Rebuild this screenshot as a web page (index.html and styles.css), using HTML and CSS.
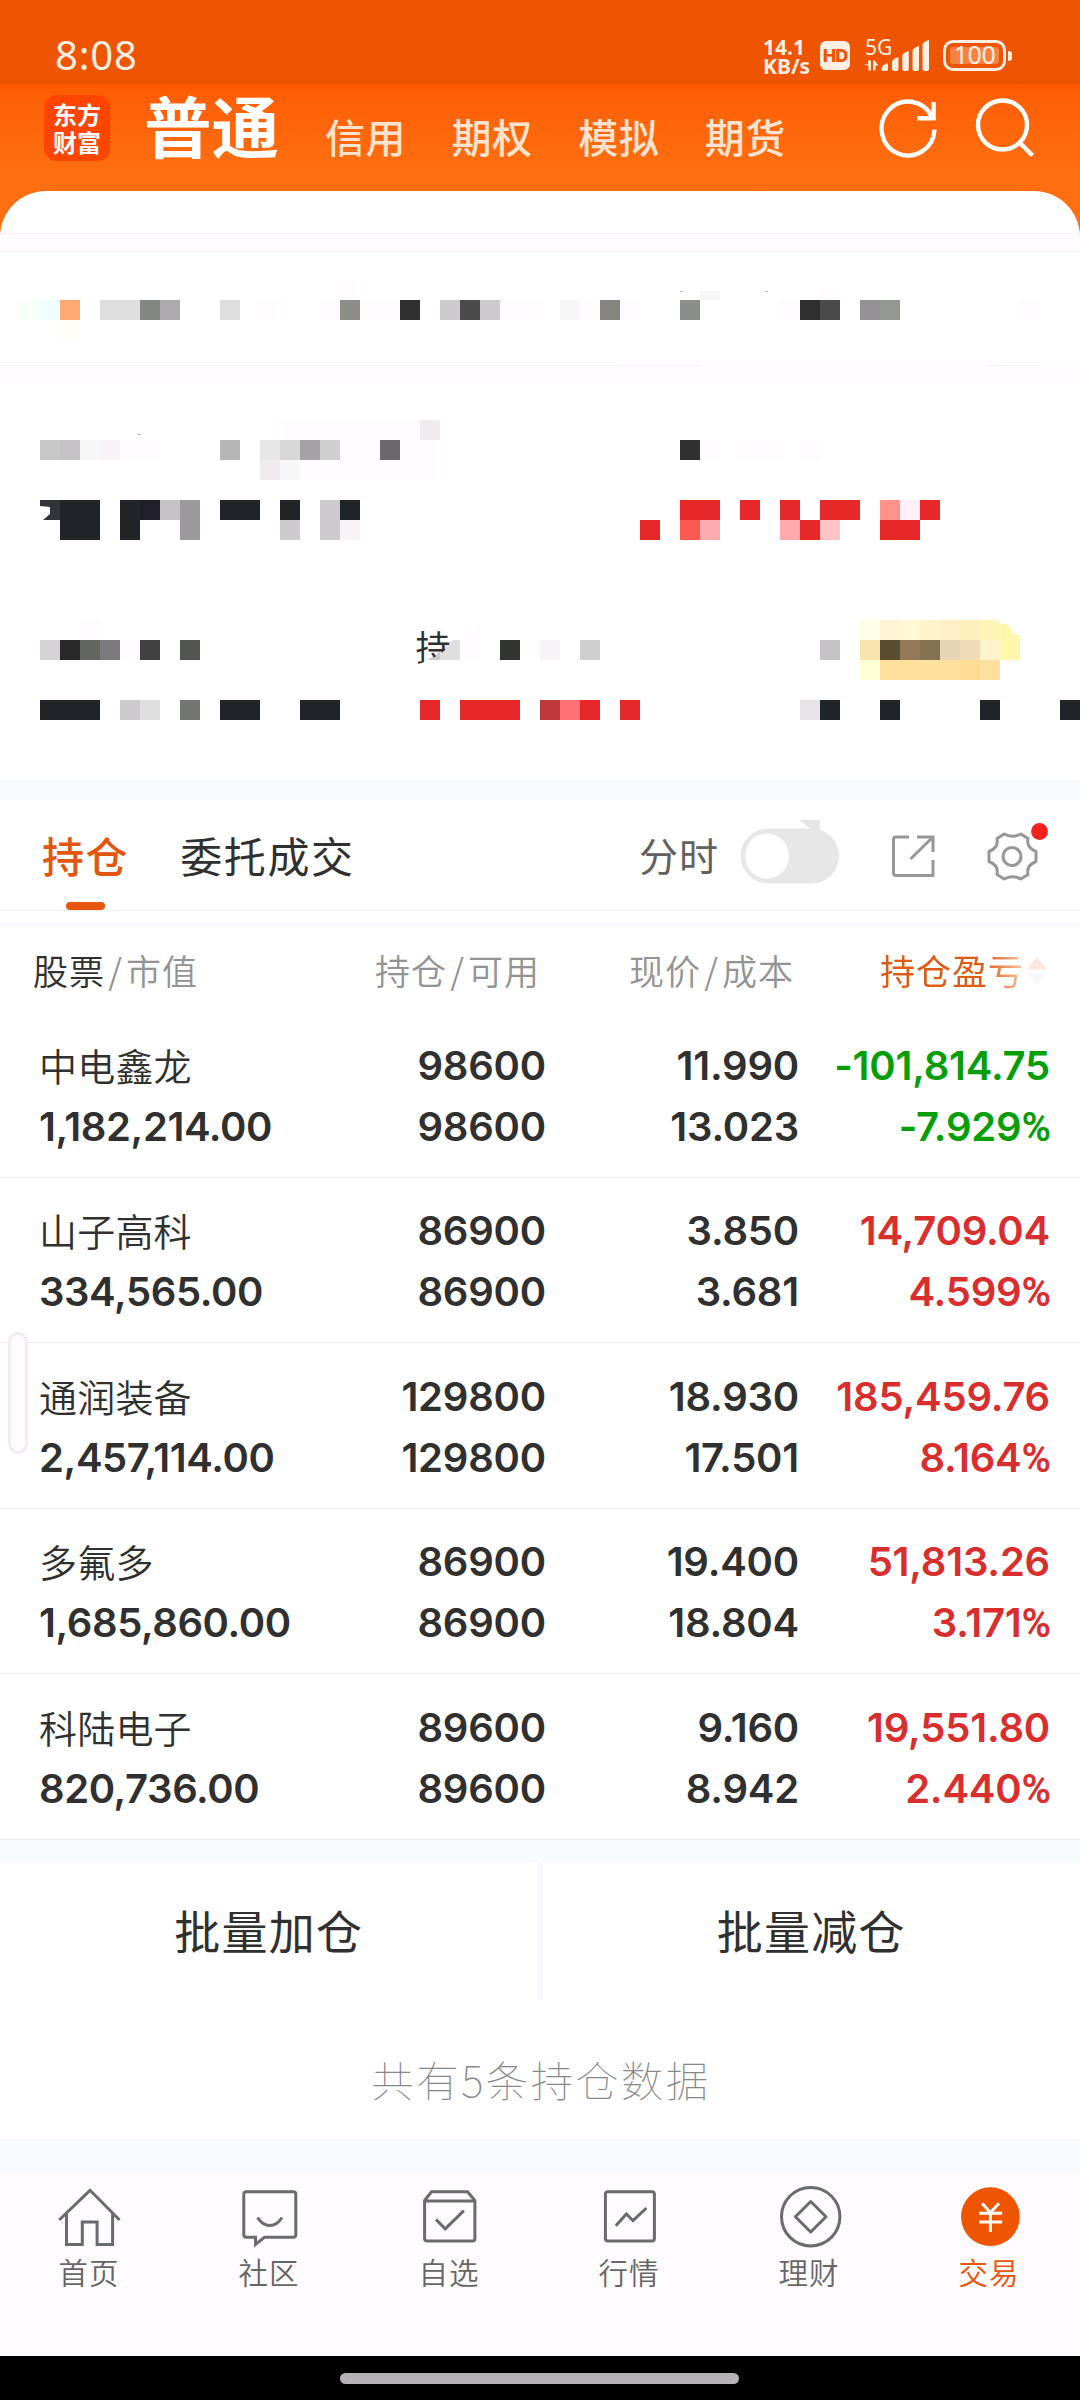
FILE: index.html
```html
<!DOCTYPE html>
<html lang="zh-CN">
<head>
<meta charset="utf-8">
<title>交易</title>
<link rel="stylesheet" href="styles.css">
</head>
<body>
<div class="status">
  <span class="clock">8:08</span>
  <div class="status-icons">
    <div class="speed">14.1<br>KB/s</div>
    <span class="hd">HD</span>
    <div class="signal">
      <span class="net">5G</span>
      <svg width="70" height="34" viewBox="862 38 70 34" fill="#ffeee2">
        <path d="M868 60.500h3v10h-2.500v-4.500l-5-1.500 4.500 0zM873 60.500h1.500l4 5h-3v5h-2.500z"/>
        <path d="M881.500 69q0-4 6.500-6v6q0 2-2 2h-3q-1.500 0-1.500-2zM892 61q2-3 6.500-4v12q0 2-2 2h-2.500q-2 0-2-2zM902.300 55q2-3 6.500-4v18q0 2-2 2h-2.500q-2 0-2-2zM912.500 50q2-3 6.500-4v23q0 2-2 2h-2.500q-2 0-2-2zM922.500 44q2-3 6.500-4v29q0 2-2 2h-2.500q-2 0-2-2z"/>
      </svg>
    </div>
    <div class="battery"><span class="level">100</span></div>
    <i class="battery-cap"></i>
  </div>
</div>

<div class="hero">
  <header class="appbar">
    <div class="logo">东方<br>财富</div>
    <nav class="modes">
      <span class="mode-on">普通</span><span class="mode">信用</span><span class="mode">期权</span><span class="mode">模拟</span><span class="mode">期货</span>
    </nav>
    <svg class="bar-icons" width="170" height="70" viewBox="870 94 170 70" fill="none" stroke="#fff" stroke-width="4.400">
      <path d="M934.500 129.500a26.500 27 0 1 1-3-13.500"/>
      <path d="M933.600 102v16.200H917"/>
      <circle cx="1002.500" cy="125" r="24.500"/>
      <path d="M1019.500 142.500l13 13"/>
    </svg>
  </header>
  <section class="sheet">
    <svg width="1080" height="589" viewBox="0 191 1080 589" shape-rendering="crispEdges">
      <g fill="#fffbff">
        <path d="M0 233h1080v19H0zM0 365h1080v20H0zM620 360h380v5h-380z"/>
        <path d="M260 300h20v20h-20zM320 300h20v20h-20zM340 280h20v20h-20zM360 300h40v20h-40zM500 300h40v20h-40zM580 300h20v20h-20zM620 300h20v20h-20zM780 300h20v20h-20zM820 289h20v11h-20zM1020 300h20v20h-20z"/>
        <path d="M280 420h160v60H280zM120 440h40v20h-40zM700 440h20v20h-20zM740 440h40v20h-40zM800 440h20v20h-20z"/>
        <path d="M80 620h20v20H80zM120 640h20v20h-20zM460 640l20-20v40h-20z"/>
      </g>
      <path fill="#fff1f3" d="M0 233h1080v1H0zM0 251h1080v1H0zM0 365h700v1H0zM987 365h54v1h-54z"/>

      <rect x="20" y="300" width="20" height="20" fill="#f7fff7"/>
      <rect x="40" y="300" width="20" height="20" fill="#efffff"/>
      <rect x="60" y="300" width="20" height="20" fill="#ffa973"/>
      <rect x="60" y="320" width="20" height="20" fill="#fffff7"/>
      <path fill="#dedede" d="M100 300h40v20h-40zM220 300h20v20h-20z"/>
      <path fill="#838681" d="M140 300h20v20h-20zM600 300h20v20h-20z"/>
      <path fill="#8b8e89" d="M340 300h20v20h-20zM680 300h20v20h-20z"/>
      <rect x="160" y="300" width="20" height="20" fill="#adaaad"/>
      <path fill="#303030" d="M400 300h20v20h-20zM800 300h20v20h-20zM680 440h20v20h-20z"/>
      <path fill="#4a4a4a" d="M460 300h20v20h-20zM820 300h20v20h-20z"/>
      <path fill="#cecbce" d="M440 300h20v20h-20zM480 300h20v20h-20z"/>
      <path fill="#f7f7f7" d="M560 300h20v20h-20zM700 291h20v9h-20z"/>
      <rect x="860" y="300" width="20" height="20" fill="#949294"/>
      <rect x="880" y="300" width="20" height="20" fill="#949792"/>
      <path fill="#bbb" d="M680 291h3v1h-3zM765 291h3v1h-3zM137 434h4v1h-4z"/>

      <rect x="420" y="420" width="20" height="20" fill="#efebef"/>
      <rect x="40" y="440" width="20" height="20" fill="#c6c7c6"/>
      <rect x="60" y="440" width="20" height="20" fill="#c6c3c6"/>
      <rect x="80" y="440" width="20" height="20" fill="#f7f7f7"/>
      <rect x="100" y="440" width="20" height="20" fill="#f7f3f7"/>
      <rect x="220" y="440" width="20" height="20" fill="#b5b6b5"/>
      <rect x="260" y="440" width="20" height="20" fill="#e7e7e7"/>
      <rect x="280" y="440" width="20" height="20" fill="#d6d7d6"/>
      <rect x="300" y="440" width="20" height="20" fill="#a5a2a5"/>
      <rect x="320" y="440" width="20" height="20" fill="#cecfce"/>
      <rect x="380" y="440" width="20" height="20" fill="#6b696b"/>
      <rect x="260" y="460" width="20" height="20" fill="#efebef"/>
      <rect x="280" y="460" width="20" height="20" fill="#f7f7f7"/>

      <path fill="#31353a" shape-rendering="auto" d="M40 500h20v20H43l7-6v-7l-10-1z"/>
      <path fill="#21252a" d="M60 500h40v40H60zM120 500h20v40h-20zM220 500h40v20h-40zM280 500h20v20h-20zM340 500h20v20h-20z"/>
      <rect x="140" y="500" width="20" height="20" fill="#211f29"/>
      <rect x="160" y="500" width="20" height="20" fill="#c6c3c6"/>
      <rect x="180" y="500" width="20" height="40" fill="#9c9a9c"/>
      <path fill="#cecbce" d="M320 500h20v40h-20zM280 520h20v20h-20z"/>
      <rect x="340" y="520" width="20" height="20" fill="#f7f3f7"/>
      <path fill="#e72829" d="M680 500h40v20h-40zM740 500h20v20h-20zM780 500h20v20h-20zM820 500h40v20h-40zM920 500h20v20h-20zM640 520h20v20h-20zM800 520h20v20h-20zM880 520h40v20h-40z"/>
      <rect x="880" y="500" width="20" height="20" fill="#ff928c"/>
      <rect x="900" y="500" width="20" height="20" fill="#fff0f7"/>
      <rect x="680" y="520" width="20" height="20" fill="#fa5a52"/>
      <path fill="#ffaaad" d="M700 520h20v20h-20zM780 520h20v20h-20z"/>
      <rect x="820" y="520" width="20" height="20" fill="#ffc3c6"/>

      <rect x="40" y="640" width="20" height="20" fill="#d6d3d6"/>
      <rect x="60" y="640" width="20" height="20" fill="#292829"/>
      <rect x="80" y="640" width="20" height="20" fill="#636561"/>
      <rect x="100" y="640" width="20" height="20" fill="#7b797b"/>
      <rect x="140" y="640" width="20" height="20" fill="#424142"/>
      <rect x="180" y="640" width="20" height="20" fill="#525552"/>
      <path fill="#dedfde" shape-rendering="auto" d="M440 651l13-11h7v20h-20z"/>
      <path fill="#cecbce" shape-rendering="auto" d="M427 660l7-4 6-5v9z"/>
      <rect x="500" y="640" width="20" height="20" fill="#313431"/>
      <rect x="540" y="640" width="20" height="20" fill="#f7f3f7"/>
      <rect x="580" y="640" width="20" height="20" fill="#cecfce"/>
      <rect x="820" y="640" width="20" height="20" fill="#c6c3c6"/>
      <clipPath id="cut"><path d="M410 625h45v14l-12 13-15 9-10 3h-8z"/></clipPath>
      <text class="held" x="415.500" y="660.500" clip-path="url(#cut)">持</text>

      <rect x="860" y="620" width="20" height="20" fill="#ffffe7"/>
      <rect x="880" y="620" width="20" height="20" fill="#fff3d6"/>
      <rect x="900" y="620" width="20" height="20" fill="#fff7d6"/>
      <rect x="920" y="620" width="20" height="20" fill="#fff3ce"/>
      <rect x="940" y="620" width="20" height="20" fill="#ffefc6"/>
      <rect x="960" y="620" width="20" height="20" fill="#ffefbd"/>
      <path fill="#fff3b5" shape-rendering="auto" d="M980 620h17l3 3v17h-20z"/>
      <path fill="#fff7ad" shape-rendering="auto" d="M1000 624h8l6 10 6 1v25h-20z"/>
      <rect x="860" y="640" width="20" height="20" fill="#f7e3ad"/>
      <rect x="880" y="640" width="20" height="20" fill="#5a4d31"/>
      <rect x="900" y="640" width="20" height="20" fill="#94795a"/>
      <rect x="920" y="640" width="20" height="20" fill="#847352"/>
      <rect x="940" y="640" width="20" height="20" fill="#e7d3b5"/>
      <rect x="960" y="640" width="20" height="20" fill="#efdbb5"/>
      <rect x="980" y="640" width="20" height="20" fill="#fff3ce"/>
      <rect x="860" y="660" width="20" height="20" fill="#ffffd6"/>
      <rect x="880" y="660" width="120" height="20" fill="#ffdf9c"/>
      <rect x="960" y="660" width="20" height="20" fill="#ffdb94"/>

      <path fill="#21252a" d="M40 700h60v20H40zM220 700h40v20h-40zM300 700h40v20h-40zM820 700h20v20h-20zM880 700h20v20h-20zM980 700h20v20h-20zM1060 700h20v20h-20z"/>
      <rect x="120" y="700" width="20" height="20" fill="#cecbce"/>
      <rect x="140" y="700" width="20" height="20" fill="#dedfde"/>
      <rect x="180" y="700" width="20" height="20" fill="#737573"/>
      <path fill="#e72829" d="M420 700h20v20h-20zM460 700h60v20h-60zM580 700h20v20h-20zM620 700h20v20h-20z"/>
      <rect x="540" y="700" width="20" height="20" fill="#bd383a"/>
      <rect x="560" y="700" width="20" height="20" fill="#ff7173"/>
      <rect x="800" y="700" width="20" height="20" fill="#e7e3e7"/>
    </svg>
  </section>
</div>

<div class="band band-a"></div>
<section class="tabs">
  <div class="tab tab-on">持仓</div>
  <div class="tab">委托成交</div>
  <span class="minute">分时</span>
  <svg class="tools" width="340" height="110" viewBox="740 800 340 110" fill="none">
    <rect x="740.500" y="828.500" width="98.500" height="55" rx="27.500" fill="#e7e7e7"/>
    <path d="M799 820h21v13l-8-3z" fill="#e7e7e7"/>
    <ellipse cx="767" cy="856" rx="22" ry="22.500" fill="#fff"/>
    <g stroke="#979797" stroke-width="3">
      <path d="M909 837h-13q-2.500 0-2.500 2.500V873q0 2.500 2.500 2.500h37V860M917 837h16v15M933 837l-22.500 22"/>
      <circle cx="1012" cy="856.500" r="9"/>
      <path stroke-linejoin="round" d="M1004.200 834Q1012.500 838.500 1020.800 834L1028 838.500Q1026 847.500 1036 851.500V861.500Q1026 865.500 1028 874.500L1020.800 879Q1012.500 874.500 1004.200 879L997 874.500Q999 865.500 989 861.500V851.500Q999 847.500 997 838.500Z"/>
    </g>
    <circle cx="1039.500" cy="831.500" r="8.400" fill="#f2221f"/>
  </svg>
</section>
<div class="thin-band"></div>

<div class="thead">
  <div class="th"><b>股票</b><i>/</i>市值</div>
  <div class="th">持仓<i>/</i>可用</div>
  <div class="th">现价<i>/</i>成本</div>
  <div class="th th-pl"><span>持仓盈亏</span><svg width="22" height="30" viewBox="0 0 22 30"><path d="M1 13.500L11 1l10 12.500z" fill="#fde6da"/><path d="M1 17h20L11 29z" fill="#f9f7fa"/></svg></div>
</div>

<main class="rows">
  <div class="row"><div class="c"><span class="name">中电鑫龙</span><span>1,182,214.00</span></div><div class="c"><span>98600</span><span>98600</span></div><div class="c"><span>11.990</span><span>13.023</span></div><div class="c down"><span>-101,814.75</span><span>-7.929<b>%</b></span></div></div>
  <div class="row"><div class="c"><span class="name">山子高科</span><span>334,565.00</span></div><div class="c"><span>86900</span><span>86900</span></div><div class="c"><span>3.850</span><span>3.681</span></div><div class="c up"><span>14,709.04</span><span>4.599<b>%</b></span></div></div>
  <div class="row"><div class="c"><span class="name">通润装备</span><span>2,457,114.00</span></div><div class="c"><span>129800</span><span>129800</span></div><div class="c"><span>18.930</span><span>17.501</span></div><div class="c up"><span>185,459.76</span><span>8.164<b>%</b></span></div></div>
  <div class="row"><div class="c"><span class="name">多氟多</span><span>1,685,860.00</span></div><div class="c"><span>86900</span><span>86900</span></div><div class="c"><span>19.400</span><span>18.804</span></div><div class="c up"><span>51,813.26</span><span>3.171<b>%</b></span></div></div>
  <div class="row"><div class="c"><span class="name">科陆电子</span><span>820,736.00</span></div><div class="c"><span>89600</span><span>89600</span></div><div class="c"><span>9.160</span><span>8.942</span></div><div class="c up"><span>19,551.80</span><span>2.440<b>%</b></span></div></div>
  <i class="side-handle"></i>
</main>

<div class="band band-b"></div>
<div class="actions"><div class="action">批量加仓</div><i class="split"></i><div class="action">批量减仓</div></div>
<div class="note">共有5条持仓数据</div>
<div class="band band-c"></div>

<footer class="nav">
  <div class="item"><svg width="80" height="64" viewBox="0 0 80 64"><path d="M9.200 34L40 4.300 69.600 34M16.500 27v31.400h15.800V36h14.800v22.400h15.500V27"/></svg><span>首页</span></div>
  <div class="item"><svg width="80" height="64" viewBox="0 0 80 64"><path d="M16.300 5.700h47q2.500 0 2.500 2.500v40.600q0 2.500-2.500 2.500H34.500l-9 7.200v-7.200h-9.200q-2.500 0-2.500-2.500V8.200q0-2.500 2.500-2.500zM27.600 31.500q4.900 8 12.200 8t12.200-8"/></svg><span>社区</span></div>
  <div class="item"><svg width="80" height="64" viewBox="0 0 80 64"><path d="M14.600 14.500l6.900-8.800h36.100l7.300 8.800v38q0 2.500-2.500 2.500H17.100q-2.500 0-2.500-2.500zM14.600 15h50.300M26 33.500l9.200 9.300 18.700-18.100"/></svg><span>自选</span></div>
  <div class="item"><svg width="80" height="64" viewBox="0 0 80 64"><rect x="15.400" y="5.700" width="49" height="49.300" rx="2.500"/><path d="M25.800 39.700L36.400 28l6.600 6.700L56.400 22"/></svg><span>行情</span></div>
  <div class="item"><svg width="80" height="64" viewBox="0 0 80 64"><circle cx="40.700" cy="30.700" r="29.200"/><path stroke-linejoin="round" d="M40.700 15.500L56 30.700 40.700 46 25.400 30.700z"/></svg><span>理财</span></div>
  <div class="item item-on"><svg width="80" height="64" viewBox="0 0 80 64"><circle cx="40.400" cy="30.700" r="29.400"/><path d="M32.100 17.300l8.300 9.500 8.600-9.500M40.400 26.500V46M29 27.300h23.200M29 36h23.200"/></svg><span>交易</span></div>
</footer>
<div class="home"><i></i></div>
</body>
</html>
```
FILE: styles.css
```css
* { box-sizing: border-box; }
body {
  margin: 0;
  width: 1080px;
  height: 2400px;
  overflow: hidden;
  background: #fff;
  color: #303030;
  font-family: Inter, "Noto Sans CJK SC", sans-serif;
}
i, b { font-style: normal; font-weight: inherit; }
svg { display: block; flex: none; }

/* status bar */
.status {
  height: 84px;
  background: #ef5500;
  color: #ffeee2;
  display: flex;
  justify-content: space-between;
  padding: 38px 68px 0 55px;
}
.clock { font: 400 40px/34px "Noto Sans", sans-serif; letter-spacing: 0.800px; }
.status-icons { display: flex; height: 36px; }
.speed { width: 57px; font: 700 21px/19px "Noto Sans", sans-serif; }
.hd {
  width: 30px; height: 29px; margin-top: 3px;
  border-radius: 6px;
  background: #ffeee2; color: #ef5500;
  font: 800 18px/29px Inter, sans-serif;
  text-align: center; letter-spacing: -1px;
}
.signal { position: relative; margin-left: 12px; width: 81px; }
.net { position: absolute; left: 3px; top: -1px; font: 400 21px/20px "Noto Sans", sans-serif; }
.battery {
  width: 63px; height: 31px; margin-top: 2px; padding: 4px;
  border: 3px solid #ffeee2; border-radius: 10px;
}
.level {
  display: block; height: 17px; border-radius: 3px;
  background: #f58240;
  font: 400 25px/15px "Noto Sans", sans-serif;
  text-align: center; letter-spacing: -0.500px;
}
.battery-cap { width: 4px; height: 10px; margin: 13px 0 0 2px; border-radius: 0 3px 3px 0; background: #ffeee2; }

/* app bar */
.hero { background: linear-gradient(#ff5900 0, #ff6108 20px, #ff6d10 80px, #ff7110 150px); }
.appbar { height: 107px; display: flex; padding: 0 40px 0 44px; }
.logo {
  width: 66px; height: 66px; margin-top: 11px; padding-top: 5px;
  border-radius: 13px; background: #ff4500; color: #fff;
  text-align: center;
  font: 700 24px/28px "Noto Sans CJK SC", sans-serif;
}
.modes {
  flex: 1; margin-left: 34px; padding-top: 1px;
  display: flex; align-items: baseline;
  color: #ffe3ce;
  font-family: "Noto Sans CJK SC", sans-serif;
}
.mode-on { color: #fff; font-size: 67.500px; line-height: 78px; font-weight: 700; margin: 0 12px 0 0; }
.mode { font-size: 40px; font-weight: 500; letter-spacing: 0.500px; margin: 0 11px 0 34px; width: 81px; }
.mode + .mode { margin-left: 34.600px; }
.bar-icons { margin-top: 10px; }

.sheet { height: 589px; background: #fff; border-radius: 46px 46px 0 0; overflow: hidden; }
.held { font: 400 35px "Noto Sans CJK SC", sans-serif; fill: #303030; }

.band { background: #f7fbff; }
.band-a { height: 20px; }
.band-b { height: 22px; }
.band-c { height: 34px; }

/* tabs */
.tabs {
  height: 111px; border-bottom: 1px solid #f0f0f0;
  display: flex; padding-left: 42px;
  font-family: "Noto Sans CJK SC", sans-serif;
}
.tab { position: relative; margin-right: 51px; font-size: 42px; line-height: 109px; letter-spacing: 1.600px; }
.tab-on { color: #e2570f; font-weight: 500; }
.tab-on::after {
  content: ""; position: absolute; left: 24px; bottom: 0;
  width: 39px; height: 8px; border-radius: 4px; background: #e7550f;
}
.minute { margin-left: auto; font-size: 39px; line-height: 108px; color: #606060; letter-spacing: 1px; margin-right: 21px; }
.thin-band { height: 5px; margin-top: 11px; background: #f7fbff; }

/* column headings */
.thead {
  height: 85px;
  display: grid; grid-template-columns: 342px 254px 251px 1fr;
  padding-left: 33px;
  font: 350 35px/85px "Noto Sans CJK SC", sans-serif;
  color: #939393;
}
.th { letter-spacing: 1px; white-space: nowrap; }
.th b { color: #303030; }
.th i { display: inline-block; width: 21px; text-align: center; }
.th-pl { display: flex; align-items: center; font-weight: 400; }
.th-pl span {
  color: transparent;
  background: linear-gradient(90deg, #de5b14 105px, #f7d3c0 148px);
  -webkit-background-clip: text; background-clip: text;
}
.th-pl svg { margin-left: 2px; margin-top: 3px; }

/* holdings */
.rows { position: relative; }
.row {
  height: 165.500px;
  border-bottom: 1px solid #ebebeb;
  display: grid; grid-template-columns: 300px 207px 253px 251px;
  padding: 22.800px 0 0 39px;
}
.c { display: flex; flex-direction: column; text-align: right; font-size: 40px; font-weight: 600; line-height: 61px; letter-spacing: -0.200px; }
.c:first-child { text-align: left; letter-spacing: -0.400px; }
.c b { font-family: Roboto, sans-serif; letter-spacing: -1px; }
.c .name { font-family: "Noto Sans CJK SC", sans-serif; font-weight: 350; font-size: 38px; letter-spacing: 0.200px; position: relative; top: -1px; }
.down { color: #069e06; }
.up { color: #d92e2e; }
.side-handle {
  position: absolute; left: 8px; top: 320px;
  width: 20px; height: 122px;
  border: 3px solid #f0edf2; border-radius: 10px; background: #fffbff;
}

.actions {
  height: 138.500px; display: flex;
  font: 400 46px/120px "Noto Sans CJK SC", sans-serif;
}
.action { flex: 1; text-align: center; padding-top: 7px; letter-spacing: 1.200px; }
.split { width: 5px; background: #f7f8ff; }
.note {
  height: 139px; text-align: center; padding-left: 2px;
  font: 100 42.500px/157px "Noto Sans CJK SC", sans-serif;
  letter-spacing: 2.500px; color: #888;
}

/* bottom navigation */
.nav { height: 183px; background: #fffbff; display: grid; grid-template-columns: repeat(6, 1fr); padding-top: 13px; }
.item { display: flex; flex-direction: column; align-items: center; color: #666; font: 350 29.500px/44px "Noto Sans CJK SC", sans-serif; letter-spacing: 1px; }
.item svg { fill: none; stroke: #6b6b6b; stroke-width: 3; }
.item span { margin-top: -1px; margin-right: 2px; }
.item-on { color: #e7570f; }
.item-on circle { fill: #ef5500; stroke: none; }
.item-on path { stroke: #fff; }
.home { height: 44px; background: #000; padding: 17px 0 0 340px; }
.home i { display: block; width: 399px; height: 11px; border-radius: 6px; background: #b5b2b5; }
```
